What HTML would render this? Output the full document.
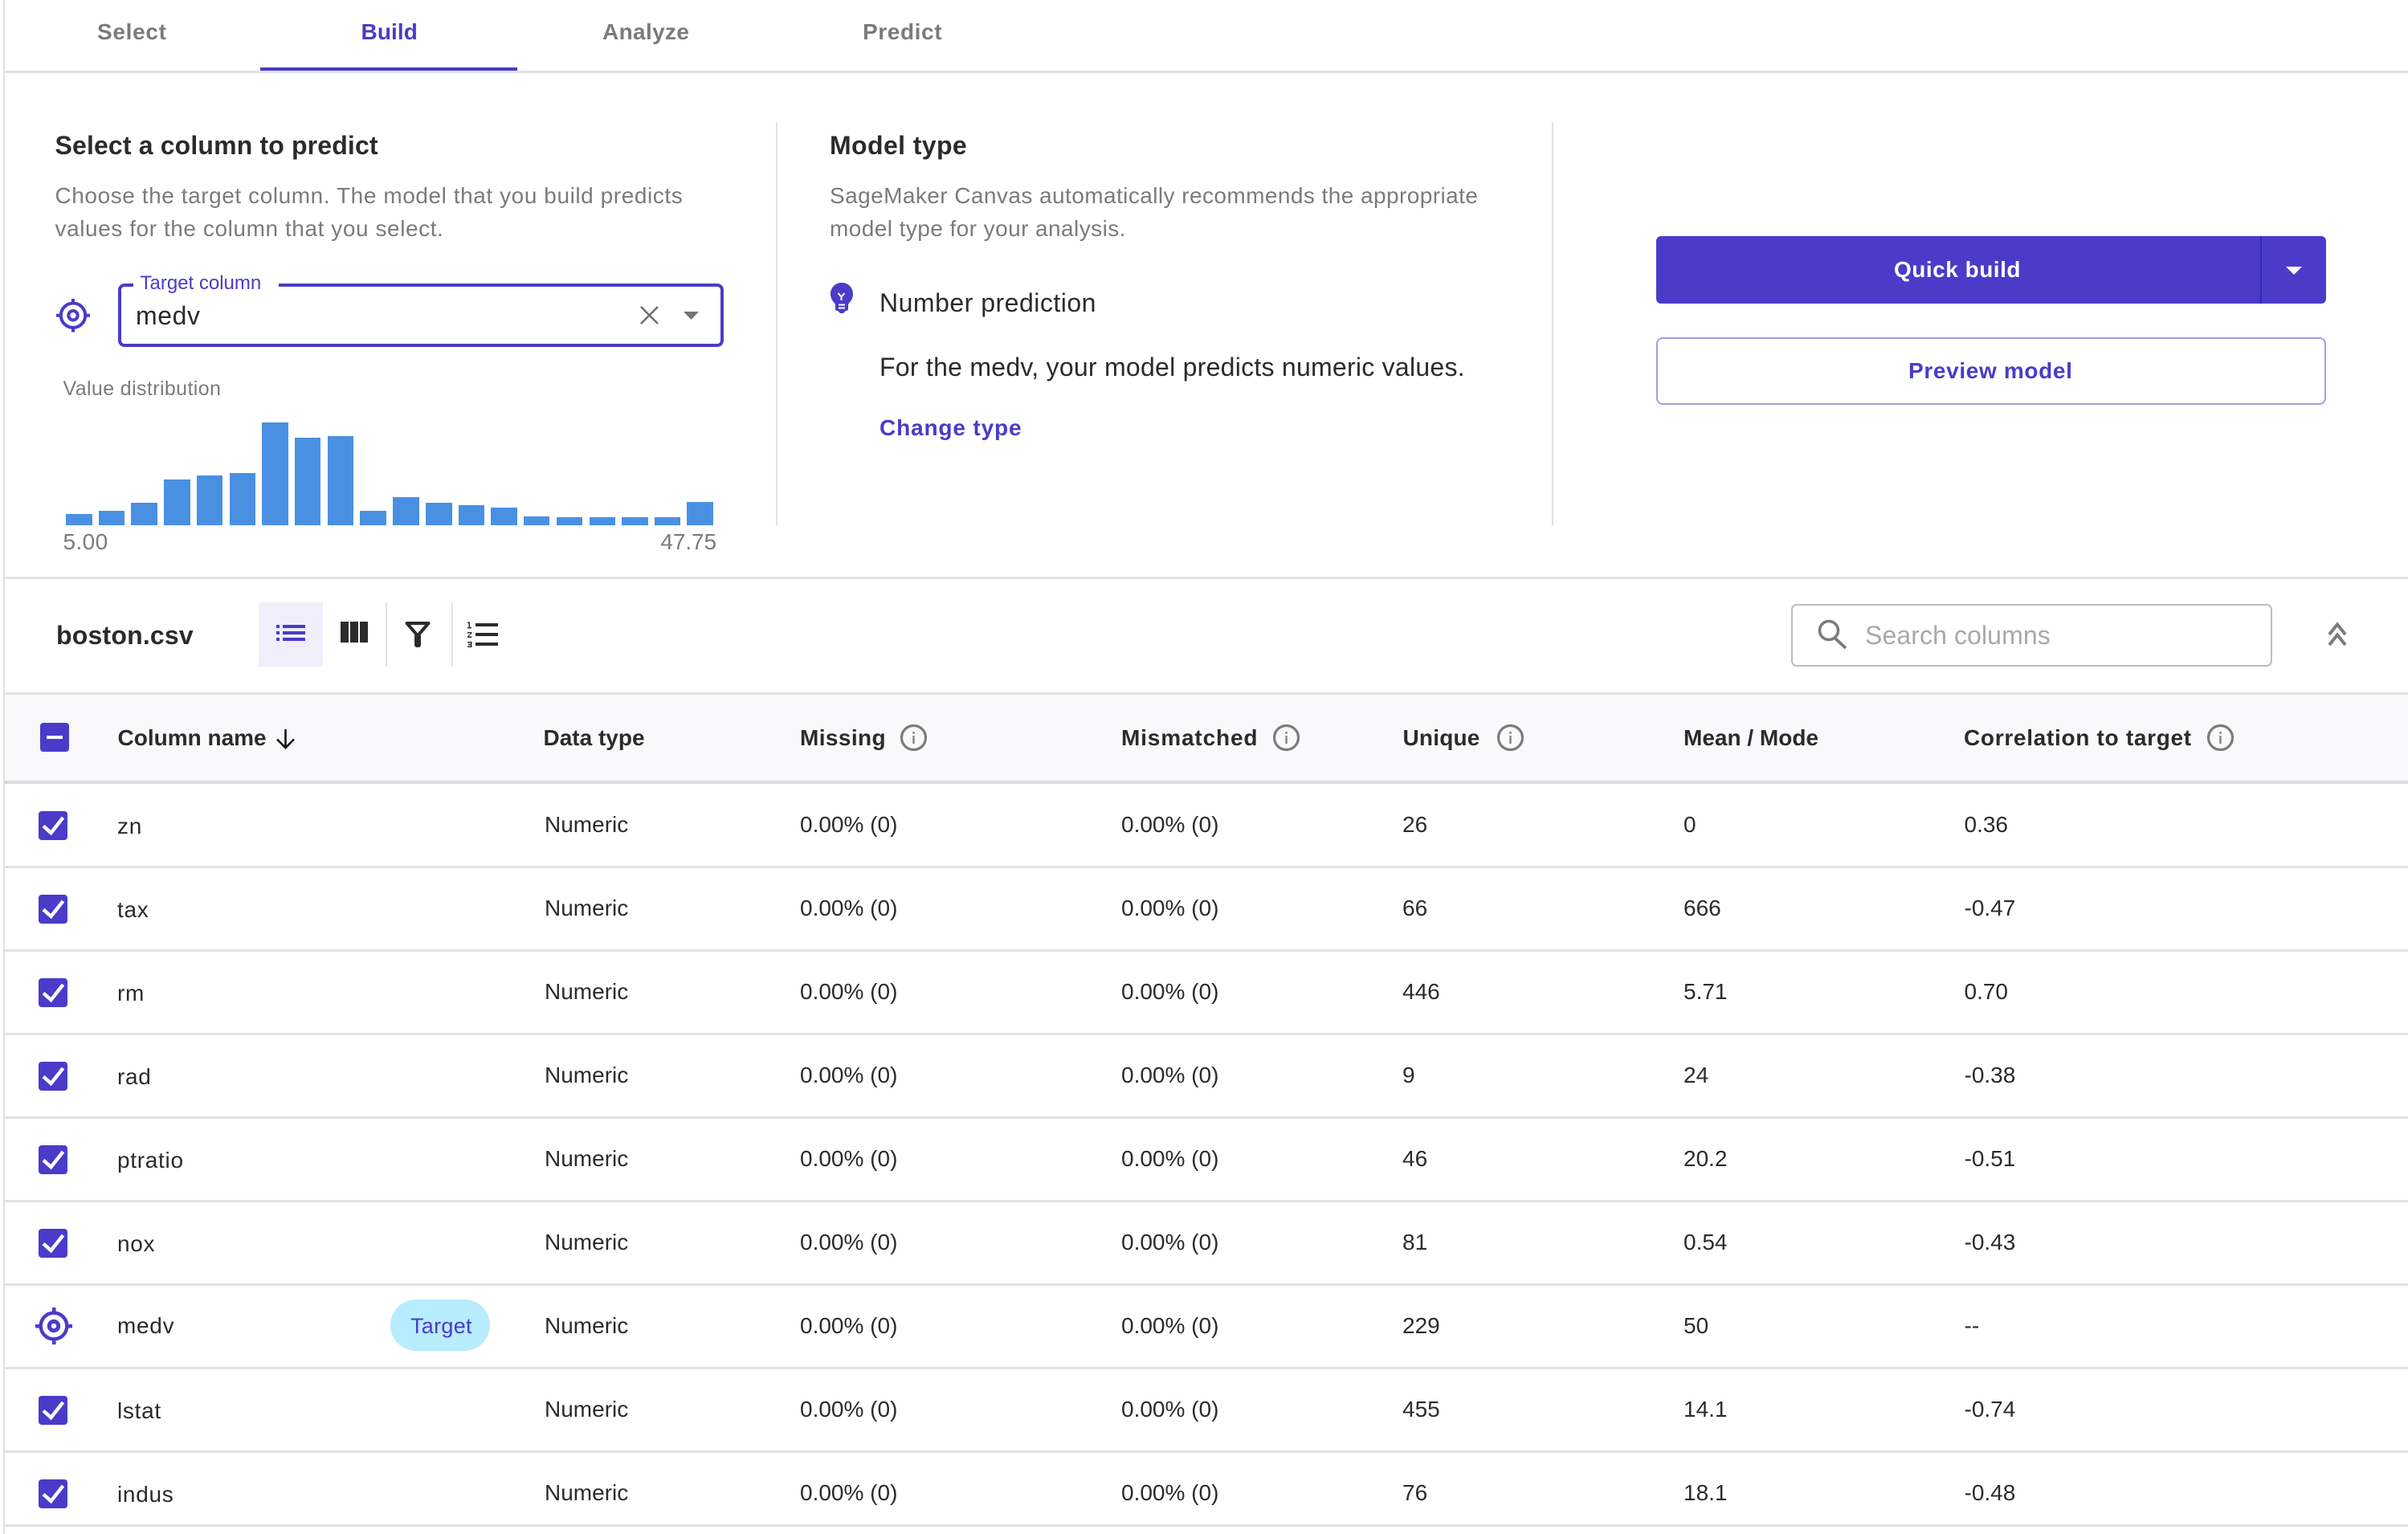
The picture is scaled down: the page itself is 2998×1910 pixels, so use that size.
<!DOCTYPE html>
<html><head><meta charset="utf-8"><style>
*{box-sizing:border-box;margin:0;padding:0}
html,body{width:2998px;height:1910px;background:#fff;overflow:hidden}
body{position:relative;font-family:"Liberation Sans",sans-serif;color:#2b2b2b}
.t{position:absolute;white-space:nowrap;line-height:40px;font-size:28px}
.b{font-weight:700}
.p{color:#4a3bc9}
.g{color:#7b7b7b}
.h{font-size:32px}
.r{position:absolute;left:6px;width:2992px;height:104px}
.r .t{top:32px}
.r .n{top:34px;left:140px;letter-spacing:.7px}
.l{position:absolute;background:#e2e2e2}
.c1{left:672px}.c2{left:990px}.c3{left:1390px}.c4{left:1740px}.c5{left:2090px}.c6{left:2439.500px}
.chk{position:absolute;left:42px;top:35px;width:36px;height:36px}
.info{position:absolute;top:902px;width:33px;height:33px}
.bar{position:absolute;width:32.5px;background:#4a90e2}
svg{position:absolute;overflow:visible}
</style></head><body>
<svg width="0" height="0" style="position:absolute"><defs>
<symbol id="chk" viewBox="0 0 36 36"><rect width="36" height="36" rx="4" fill="#4a3bc9"/><path d="M6 18.5 15.5 27 30.5 8" fill="none" stroke="#fff" stroke-width="4.4"/></symbol>
<symbol id="inf" viewBox="0 0 33 33"><circle cx="16.5" cy="16.5" r="15" fill="none" stroke="#7b7b7b" stroke-width="3.2"/><rect x="15.2" y="14" width="2.6" height="10" fill="#8a8a8a"/><rect x="15.2" y="9" width="2.6" height="2.8" fill="#8a8a8a"/></symbol>
</defs></svg>

<div class="l" style="left:4px;top:0;width:2px;height:1910px;background:#e0e0e0"></div>
<div class="l" style="left:5px;top:88px;width:2993px;height:3px"></div>

<span class="t b g" style="left:121px;top:20px;letter-spacing:.7px">Select</span>
<span class="t b p" style="left:449.500px;top:20px;letter-spacing:.1px">Build</span>
<span class="t b g" style="left:750px;top:20px;letter-spacing:.35px">Analyze</span>
<span class="t b g" style="left:1074px;top:20px;letter-spacing:.6px">Predict</span>
<div style="position:absolute;left:324px;top:84px;width:320px;height:4px;background:#4a3bc9"></div>

<span class="t b h" style="left:68.500px;top:161px;letter-spacing:.15px">Select a column to predict</span>
<span class="t g" style="left:68.500px;top:224px;letter-spacing:.57px">Choose the target column. The model that you build predicts</span>
<span class="t g" style="left:68.500px;top:265px;letter-spacing:.57px">values for the column that you select.</span>

<svg style="left:0;top:0" width="130" height="440">
<g fill="none" stroke="#4a3bc9"><circle cx="91" cy="392.700" r="15.200" stroke-width="4"/><circle cx="91" cy="392.700" r="5.700" stroke-width="4"/></g>
<g fill="#4a3bc9"><rect x="89" y="372" width="4" height="6"/><rect x="89" y="407.500" width="4" height="6"/><rect x="70" y="390.700" width="6" height="4"/><rect x="106" y="390.700" width="6" height="4"/></g>
</svg>
<div style="position:absolute;left:146.500px;top:353px;width:754.500px;height:79px;border:4px solid #4a3bc9;border-radius:8px"></div>
<div style="position:absolute;left:166px;top:350px;width:181px;height:8px;background:#fff"></div>
<span class="t p" style="left:174.500px;top:333px;font-size:24px">Target column</span>
<span class="t h" style="left:169px;top:373px;letter-spacing:.6px">medv</span>
<svg style="left:0;top:0" width="900" height="440"><path d="M798 382 819 403M819 382 798 403" stroke="#6e6e6e" stroke-width="2.600" fill="none"/><path d="M851 388H870L860.500 398Z" fill="#757575"/></svg>

<span class="t g" style="left:78.500px;top:464px;font-size:25px;letter-spacing:.38px">Value distribution</span>
<div class="bar" style="left:82px;top:640px;height:14px"></div>
<div class="bar" style="left:122.600px;top:635.500px;height:18.500px"></div>
<div class="bar" style="left:163.300px;top:626px;height:28px"></div>
<div class="bar" style="left:204px;top:597px;height:57px"></div>
<div class="bar" style="left:244.800px;top:592px;height:62px"></div>
<div class="bar" style="left:285.500px;top:589px;height:65px"></div>
<div class="bar" style="left:326px;top:526px;height:128px"></div>
<div class="bar" style="left:366.700px;top:545px;height:109px"></div>
<div class="bar" style="left:407.500px;top:543px;height:111px"></div>
<div class="bar" style="left:448.300px;top:635.500px;height:18.500px"></div>
<div class="bar" style="left:489px;top:618.500px;height:35.500px"></div>
<div class="bar" style="left:530px;top:626px;height:28px"></div>
<div class="bar" style="left:570.800px;top:629px;height:25px"></div>
<div class="bar" style="left:611px;top:632px;height:22px"></div>
<div class="bar" style="left:651.800px;top:643px;height:11px"></div>
<div class="bar" style="left:692.700px;top:644px;height:10px"></div>
<div class="bar" style="left:733.500px;top:644px;height:10px"></div>
<div class="bar" style="left:774.300px;top:644px;height:10px"></div>
<div class="bar" style="left:814.500px;top:644px;height:10px"></div>
<div class="bar" style="left:855.200px;top:624.500px;height:29.500px"></div>
<span class="t g" style="left:78.500px;top:655px;letter-spacing:.4px">5.00</span>
<span class="t g" style="left:822px;top:655px;width:70px;text-align:right;letter-spacing:-.1px">47.75</span>

<div class="l" style="left:966px;top:152px;width:2px;height:502px"></div>
<div class="l" style="left:1931.500px;top:152px;width:2px;height:502px"></div>

<span class="t b h" style="left:1033px;top:161px;letter-spacing:.4px">Model type</span>
<span class="t g" style="left:1033px;top:224px;letter-spacing:.43px">SageMaker Canvas automatically recommends the appropriate</span>
<span class="t g" style="left:1033px;top:265px;letter-spacing:.43px">model type for your analysis.</span>
<svg style="left:0;top:0" width="1100" height="400">
<path d="M1048 352C1040 352 1034 358 1034 366C1034 372 1037 375 1040 379V385C1040 386 1041 387 1043 387L1046 390H1050L1053 387C1055 387 1056 386 1056 385V379C1059 375 1062 372 1062 366C1062 358 1056 352 1048 352Z" fill="#4a3bc9"/>
<path d="M1043.500 365 1047.500 369.500 1051.500 365M1047.500 369.500V374M1044 379.500H1052M1044 383.500H1052" stroke="#fff" stroke-width="2" fill="none"/>
</svg>
<span class="t h" style="left:1095px;top:357px;letter-spacing:.5px">Number prediction</span>
<span class="t h" style="left:1095px;top:437px;letter-spacing:.26px">For the medv, your model predicts numeric values.</span>
<span class="t b p" style="left:1095px;top:513px;letter-spacing:.85px">Change type</span>

<div style="position:absolute;left:2062px;top:294px;width:834px;height:84px;background:#4a3bc9;border-radius:6px"></div>
<div style="position:absolute;left:2814px;top:294px;width:2px;height:84px;background:#2a2aae"></div>
<span class="t b" style="left:2358px;top:316px;color:#fff;letter-spacing:.5px">Quick build</span>
<svg style="left:0;top:0" width="2900" height="400"><path d="M2846 332H2866L2856 342Z" fill="#fff"/></svg>
<div style="position:absolute;left:2062px;top:420px;width:834px;height:84px;border:2px solid #a69be6;border-radius:8px"></div>
<span class="t b p" style="left:2376px;top:442px;letter-spacing:.65px">Preview model</span>

<div class="l" style="left:5px;top:718px;width:2993px;height:3px"></div>

<span class="t b h" style="left:70px;top:771px;letter-spacing:.2px">boston.csv</span>
<div style="position:absolute;left:322px;top:750px;width:80px;height:80px;background:#f0eefb"></div>
<svg style="left:0;top:0" width="640" height="840">
<g fill="#4a3bc9"><rect x="344" y="778" width="4" height="4"/><rect x="344" y="786" width="4" height="4"/><rect x="344" y="794" width="4" height="4"/><rect x="352" y="778" width="28" height="4"/><rect x="352" y="786" width="28" height="4"/><rect x="352" y="794" width="28" height="4"/></g>
<g fill="#2b2b2b"><rect x="424" y="774" width="10" height="26"/><rect x="436" y="774" width="10" height="26"/><rect x="448" y="774" width="10" height="26"/>
<path d="M506.500 776H533.500L520 791.500Z" fill="none" stroke="#2b2b2b" stroke-width="4" stroke-linejoin="round"/><rect x="516" y="789" width="8" height="17" rx="3"/>
<rect x="592" y="776" width="28" height="4"/><rect x="592" y="788" width="28" height="4"/><rect x="592" y="800" width="28" height="4"/>
<path d="M582 774.500H585V781H587V782.500H582V781H583.500V776H582Z"/></g>
<path d="M582 787H587.500V788.500L583.500 792.500H587.500V794H582V792.500L586 788.500H582ZM582 799H587.500V806H582V804.500H586V803.300H583V801.800H586V800.500H582Z" fill="#2b2b2b"/>
</svg>
<div class="l" style="left:480px;top:750px;width:2px;height:80px"></div>
<div class="l" style="left:562px;top:750px;width:2px;height:80px"></div>

<div style="position:absolute;left:2230px;top:752px;width:599px;height:78px;border:2px solid #bdbdbd;border-radius:7px;background:#fff"></div>
<svg style="left:0;top:0" width="2930" height="840">
<circle cx="2277" cy="785" r="11.500" fill="none" stroke="#7b7b7b" stroke-width="3.600"/><path d="M2285 795 2298 807" stroke="#7b7b7b" stroke-width="3.800" fill="none"/>
<path d="M2900 790 2910 777.500 2920 790M2900 803 2910 790.500 2920 803" fill="none" stroke="#7b7b7b" stroke-width="4"/>
</svg>
<span class="t h" style="left:2322px;top:771px;color:#a9a9a9;letter-spacing:.1px">Search columns</span>

<div class="l" style="left:5px;top:862px;width:2993px;height:3px"></div>
<div style="position:absolute;left:6px;top:865px;width:2992px;height:107px;background:#f9f9fb"></div>
<div style="position:absolute;left:5px;top:972px;width:2993px;height:4px;background:#dcdcdf"></div>
<svg style="left:0;top:0" width="400" height="940">
<rect x="50" y="900" width="36" height="36" rx="4" fill="#4a3bc9"/><rect x="58" y="916" width="20" height="4" fill="#fff"/>
<path d="M355.500 908V931M345 920.500 355.500 931 366 920.500" fill="none" stroke="#111" stroke-width="2.600"/>
</svg>
<span class="t b" style="left:146.500px;top:899px">Column name</span>
<span class="t b" style="left:676.500px;top:899px">Data type</span>
<span class="t b" style="left:996px;top:899px;letter-spacing:.4px">Missing</span>
<svg class="info" style="left:1121px"><use href="#inf" width="33" height="33"/></svg>
<span class="t b" style="left:1396px;top:899px;letter-spacing:.85px">Mismatched</span>
<svg class="info" style="left:1585px"><use href="#inf" width="33" height="33"/></svg>
<span class="t b" style="left:1746.500px;top:899px;letter-spacing:.2px">Unique</span>
<svg class="info" style="left:1864px"><use href="#inf" width="33" height="33"/></svg>
<span class="t b" style="left:2096px;top:899px">Mean / Mode</span>
<span class="t b" style="left:2445px;top:899px;letter-spacing:.7px">Correlation to target</span>
<svg class="info" style="left:2748px"><use href="#inf" width="33" height="33"/></svg>

<div class="r" style="top:975px"><svg class="chk"><use href="#chk" width="36" height="36"/></svg><span class="t n">zn</span><span class="t c1">Numeric</span><span class="t c2">0.00% (0)</span><span class="t c3">0.00% (0)</span><span class="t c4">26</span><span class="t c5">0</span><span class="t c6">0.36</span></div>
<div class="l" style="left:5px;top:1078px;width:2993px;height:3px"></div>
<div class="r" style="top:1079px"><svg class="chk"><use href="#chk" width="36" height="36"/></svg><span class="t n">tax</span><span class="t c1">Numeric</span><span class="t c2">0.00% (0)</span><span class="t c3">0.00% (0)</span><span class="t c4">66</span><span class="t c5">666</span><span class="t c6">-0.47</span></div>
<div class="l" style="left:5px;top:1182px;width:2993px;height:3px"></div>
<div class="r" style="top:1183px"><svg class="chk"><use href="#chk" width="36" height="36"/></svg><span class="t n">rm</span><span class="t c1">Numeric</span><span class="t c2">0.00% (0)</span><span class="t c3">0.00% (0)</span><span class="t c4">446</span><span class="t c5">5.71</span><span class="t c6">0.70</span></div>
<div class="l" style="left:5px;top:1286px;width:2993px;height:3px"></div>
<div class="r" style="top:1287px"><svg class="chk"><use href="#chk" width="36" height="36"/></svg><span class="t n">rad</span><span class="t c1">Numeric</span><span class="t c2">0.00% (0)</span><span class="t c3">0.00% (0)</span><span class="t c4">9</span><span class="t c5">24</span><span class="t c6">-0.38</span></div>
<div class="l" style="left:5px;top:1390px;width:2993px;height:3px"></div>
<div class="r" style="top:1391px"><svg class="chk"><use href="#chk" width="36" height="36"/></svg><span class="t n">ptratio</span><span class="t c1">Numeric</span><span class="t c2">0.00% (0)</span><span class="t c3">0.00% (0)</span><span class="t c4">46</span><span class="t c5">20.2</span><span class="t c6">-0.51</span></div>
<div class="l" style="left:5px;top:1494px;width:2993px;height:3px"></div>
<div class="r" style="top:1495px"><svg class="chk"><use href="#chk" width="36" height="36"/></svg><span class="t n">nox</span><span class="t c1">Numeric</span><span class="t c2">0.00% (0)</span><span class="t c3">0.00% (0)</span><span class="t c4">81</span><span class="t c5">0.54</span><span class="t c6">-0.43</span></div>
<div class="l" style="left:5px;top:1598px;width:2993px;height:3px"></div>
<div class="r" style="top:1599px"><span class="t n" style="top:32px">medv</span><span class="t c1">Numeric</span><span class="t c2">0.00% (0)</span><span class="t c3">0.00% (0)</span><span class="t c4">229</span><span class="t c5">50</span><span class="t c6">--</span></div>
<svg style="left:0;top:0" width="120" height="1700">
<g fill="none" stroke="#4a3bc9"><circle cx="67" cy="1651" r="16.300" stroke-width="4.400"/><circle cx="67" cy="1651" r="5.700" stroke-width="5"/></g>
<g fill="#4a3bc9"><rect x="65" y="1628" width="4.500" height="6"/><rect x="65" y="1668" width="4.500" height="6"/><rect x="44" y="1649" width="6" height="4.500"/><rect x="84" y="1649" width="6" height="4.500"/></g>
</svg>
<div style="position:absolute;left:486px;top:1618px;width:124px;height:64px;border-radius:32px;background:#b8ecff"></div>
<span class="t p" style="left:511px;top:1631px;font-size:27px;letter-spacing:.3px">Target</span>
<div class="l" style="left:5px;top:1702px;width:2993px;height:3px"></div>
<div class="r" style="top:1703px"><svg class="chk"><use href="#chk" width="36" height="36"/></svg><span class="t n">lstat</span><span class="t c1">Numeric</span><span class="t c2">0.00% (0)</span><span class="t c3">0.00% (0)</span><span class="t c4">455</span><span class="t c5">14.1</span><span class="t c6">-0.74</span></div>
<div class="l" style="left:5px;top:1806px;width:2993px;height:3px"></div>
<div class="r" style="top:1807px;height:90px"><svg class="chk"><use href="#chk" width="36" height="36"/></svg><span class="t n">indus</span><span class="t c1">Numeric</span><span class="t c2">0.00% (0)</span><span class="t c3">0.00% (0)</span><span class="t c4">76</span><span class="t c5">18.1</span><span class="t c6">-0.48</span></div>
<div class="l" style="left:5px;top:1898px;width:2993px;height:3px"></div>
</body></html>
